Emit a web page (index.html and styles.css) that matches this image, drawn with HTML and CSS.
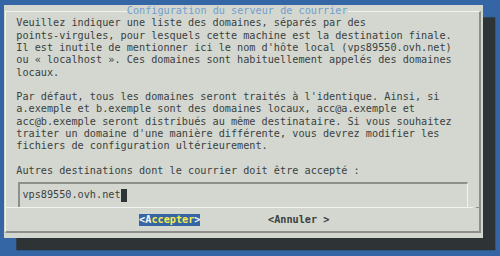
FILE: index.html
```html
<!DOCTYPE html>
<html lang="fr">
<head>
<meta charset="utf-8">
<title>Configuration du serveur de courrier</title>
<link rel="stylesheet" href="styles.css">
</head>
<body>
<div class="screen">
  <div class="dialog">
    <div class="frame">
      <div class="title">Configuration du serveur de courrier</div>
      <div class="msg">Veuillez indiquer une liste des domaines, séparés par des
points-virgules, pour lesquels cette machine est la destination finale.
Il est inutile de mentionner ici le nom d'hôte local (vps89550.ovh.net)
ou « localhost ». Ces domaines sont habituellement appelés des domaines
locaux.

Par défaut, tous les domaines seront traités à l'identique. Ainsi, si
a.exemple et b.exemple sont des domaines locaux, acc@a.exemple et
acc@b.exemple seront distribués au même destinataire. Si vous souhaitez
traiter un domaine d'une manière différente, vous devrez modifier les
fichiers de configuration ultérieurement.

Autres destinations dont le courrier doit être accepté :</div>
      <div class="field"><span class="value">vps89550.ovh.net</span><span class="cursor"></span></div>
      <div class="sep"></div>
      <div class="buttons">
        <span class="btn btn-active">&lt;<span class="key">A</span><span class="label">ccepter</span>&gt;</span>
        <span class="btn">&lt;<span class="key">A</span><span class="label">nnuler</span> &gt;</span>
      </div>
    </div>
  </div>
</div>
</body>
</html>
```
FILE: styles.css
```css
html, body {
  margin: 0;
  padding: 0;
}
body {
  width: 500px;
  height: 256px;
  overflow: hidden;
  background: #3465a4;
  font-family: "DejaVu Sans Mono", "Liberation Mono", monospace;
  font-size: 10.2px;
  line-height: 12.28px;
  color: #3b3f41;
}
.screen {
  padding: 5.16px 0 0 4px;
}
.dialog {
  box-sizing: border-box;
  width: 479px;
  height: 233.3px;
  padding: 6.14px 0 0 1px;
  background: #d3d7cf;
  box-shadow: 12.28px 12.28px 0 #2e3436;
}
.frame {
  box-sizing: border-box;
  width: 476px;
  height: 222px;
  border-top: 1px solid #f2f2f0;
  border-left: 1px solid #f2f2f0;
  border-right: 2px solid #8d8f8a;
  border-bottom: 2px solid #8d8f8a;
}
.title {
  width: max-content;
  margin: -7.14px 0 0 120.8px;
  background: #d3d7cf;
  color: #729fcf;
}
.msg {
  padding-left: 10.28px;
  white-space: pre;
}
.field {
  box-sizing: border-box;
  width: 449.65px;
  margin: 5.14px 0 0 12.35px;
  padding: 5.16px 0 5.62px 2.07px;
  border-top: 2px solid #8d8f8a;
  border-left: 2px solid #8d8f8a;
  border-right: 1px solid #f2f2f0;
  display: flex;
  white-space: pre;
}
.cursor {
  display: inline-block;
  width: 6.14px;
  height: 12.28px;
  background: #2e3436;
}
.sep {
  height: 1px;
  background: linear-gradient(to right, #f2f2f0 0, #f2f2f0 467px, transparent 467px, transparent 470px, #8d8f8a 470px);
}
.buttons {
  display: flex;
  gap: 67.54px;
  margin-top: 5.62px;
  padding-left: 133.1px;
}
.btn {
  white-space: pre;
  color: #3b3f41;
  font-weight: bold;
}
.btn-active {
  background: #3465a4;
  color: #f4f4f2;
}
.btn-active .label {
  color: #fce94f;
}
```
